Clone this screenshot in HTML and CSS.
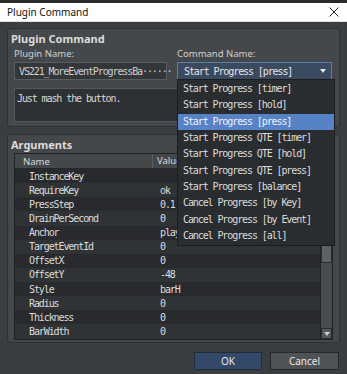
FILE: index.html
```html
<!DOCTYPE html>
<html>
<head>
<meta charset="utf-8">
<link rel="stylesheet" href="styles.css">
</head>
<body>
<div class="topstrip"></div>
<div class="titlebar">
  <span class="title">Plugin Command</span>
  <svg class="close" width="10" height="10" viewBox="0 0 10 10"><path d="M0.5 0.5 L9.5 9.5 M9.5 0.5 L0.5 9.5" stroke="#222" stroke-width="1"/></svg>
</div>
<div class="dialog">
  <section class="group g1">
    <h2 class="gtitle">Plugin Command</h2>
    <div class="fields">
      <div class="field">
        <div class="label">Plugin Name:</div>
        <div class="input mono"><span>VS221_MoreEventProgressBa···</span><span class="more">···</span></div>
      </div>
      <div class="field">
        <div class="label">Command Name:</div>
        <div class="combo mono"><span>Start Progress [press]</span><span class="arrow"></span></div>
      </div>
    </div>
    <div class="desc mono">Just mash the button.</div>
  </section>
  <section class="group g2">
    <h2 class="gtitle">Arguments</h2>
    <div class="table mono">
      <div class="tbody">
        <div class="row head"><div class="c1">Name</div><div class="c2">Value</div></div>
        <div class="row"><div class="c1">InstanceKey</div><div class="c2"></div></div>
        <div class="row"><div class="c1">RequireKey</div><div class="c2">ok</div></div>
        <div class="row"><div class="c1">PressStep</div><div class="c2">0.1</div></div>
        <div class="row"><div class="c1">DrainPerSecond</div><div class="c2">0</div></div>
        <div class="row"><div class="c1">Anchor</div><div class="c2">player</div></div>
        <div class="row"><div class="c1">TargetEventId</div><div class="c2">0</div></div>
        <div class="row"><div class="c1">OffsetX</div><div class="c2">0</div></div>
        <div class="row"><div class="c1">OffsetY</div><div class="c2">-48</div></div>
        <div class="row"><div class="c1">Style</div><div class="c2">barH</div></div>
        <div class="row"><div class="c1">Radius</div><div class="c2">0</div></div>
        <div class="row"><div class="c1">Thickness</div><div class="c2">0</div></div>
        <div class="row"><div class="c1">BarWidth</div><div class="c2">0</div></div>
      </div>
      <div class="scrollbar">
        <div class="sbtn"></div>
        <div class="thumb"></div>
        <div class="track"></div>
        <div class="sbtn down"><span></span></div>
      </div>
    </div>
  </section>
  <div class="buttons">
    <div class="btn ok">OK</div>
    <div class="btn">Cancel</div>
  </div>
</div>
<ul class="dropdown mono">
  <li>Start Progress [timer]</li>
  <li>Start Progress [hold]</li>
  <li class="sel">Start Progress [press]</li>
  <li>Start Progress QTE [timer]</li>
  <li>Start Progress QTE [hold]</li>
  <li>Start Progress QTE [press]</li>
  <li>Start Progress [balance]</li>
  <li>Cancel Progress [by Key]</li>
  <li>Cancel Progress [by Event]</li>
  <li>Cancel Progress [all]</li>
</ul>
</body>
</html>
```

FILE: styles.css
```css
* { box-sizing: border-box; }
html, body { margin: 0; padding: 0; }
body {
  width: 347px;
  height: 374px;
  overflow: hidden;
  background: #3b3e41;
  font-family: "Noto Sans", "Liberation Sans", sans-serif;
  color: #d4d4d4;
  position: relative;
}
.mono {
  font-family: "DejaVu Sans Mono", monospace;
  font-size: 10px;
  letter-spacing: -1.1px;
}
.topstrip { height: 3px; background: #2a2a2a; }
.titlebar {
  height: 19px;
  background: #ffffff;
  display: flex;
  align-items: center;
  justify-content: space-between;
  padding: 0 8px 0 7px;
  border-bottom: 1px solid #e2e2e2;
}
.title { font-size: 10px; color: #111; }
.close { display: block; }
.dialog { padding: 6px 7px 0 7px; }
.group {
  background: #45484b;
  border: 1px solid #2e3033;
  border-radius: 3px;
  padding: 2px 6px 4px 6px;
}
.gtitle {
  margin: 0 0 0 -3px;
  font-size: 11px;
  font-weight: bold;
  color: #dcdcdc;
  line-height: 15px;
}
.fields {
  display: grid;
  grid-template-columns: 153px 155px;
  column-gap: 10px;
}
.label { font-size: 9.5px; line-height: 14px; color: #d0d0d0; margin-top: 1px; }
.input {
  height: 18px;
  margin-top: 1px;
  background: #34373a;
  border: 1px solid #5a5d60;
  display: flex;
  align-items: center;
  justify-content: space-between;
  padding: 0 4px;
  color: #cfcfcf;
}
.combo {
  height: 18px;
  margin-top: 1px;
  background: #3a4a60;
  border: 1px solid #5b7fa8;
  display: flex;
  align-items: center;
  justify-content: space-between;
  padding: 0 5px 0 6px;
  color: #e4e4e4;
}
.arrow {
  width: 0; height: 0;
  border-left: 3px solid transparent;
  border-right: 3px solid transparent;
  border-top: 4px solid #e8e8e8;
}
.desc {
  margin-top: 8px;
  height: 34px;
  background: #2e3134;
  border: 1px solid #55585b;
  padding: 4px 2px;
  line-height: 12px;
  color: #d8d8d8;
}
.g2 { margin-top: 7px; padding-bottom: 2px; }
.g2 .gtitle { line-height: 15px; }
.table {
  margin-top: 1px;
  height: 187px;
  border: 1px solid #1f2123;
  background: #2a2c2f;
  display: flex;
}
.tbody { flex: 1; }
.row {
  display: grid;
  grid-template-columns: 137px 1fr;
  height: 14.14px;
  align-items: center;
  color: #dcdcdc;
}
.row:nth-child(odd) { background: #303336; }
.row:nth-child(even) { background: #282a2d; }
.row .c1 { padding-left: 14px; }
.row .c2 { padding-left: 8px; white-space: nowrap; overflow: hidden; }
.row.head {
  height: 15px;
  background: #45484b;
  font-family: "Noto Sans", "Liberation Sans", sans-serif;
  letter-spacing: 0;
  font-size: 9.5px;
  color: #d8d8d8;
  border-bottom: 1px solid #25272a;
}
.row.head .c1 { padding-left: 8px; }
.row.head .c2 { border-left: 1px solid #5a5d60; height: 100%; padding-left: 4px; line-height: 14px; }
.scrollbar {
  width: 12px;
  background: #3a3d40;
  display: flex;
  flex-direction: column;
  border-left: 1px solid #222;
}
.sbtn { height: 11px; background: #55585b; border: 1px solid #2a2c2f; }
.thumb { height: 98px; background: #5e6164; border: 1px solid #2a2c2f; }
.track { flex: 1; background: #4a4d50; }
.sbtn.down { display: flex; align-items: center; justify-content: center; }
.sbtn.down span {
  width: 0; height: 0;
  border-left: 3px solid transparent;
  border-right: 3px solid transparent;
  border-top: 4px solid #cfcfcf;
}
.buttons {
  display: flex;
  justify-content: flex-end;
  gap: 8px;
  margin-top: 9px;
  padding-right: 1px;
}
.btn {
  width: 69px;
  height: 18px;
  border: 1px solid #26282a;
  background: #505356;
  color: #e6e6e6;
  font-size: 10px;
  display: flex;
  align-items: center;
  justify-content: center;
}
.btn.ok { width: 68px; background: #34486a; border-color: #222a36; }
.dropdown {
  position: absolute;
  left: 177px;
  top: 79px;
  width: 158px;
  margin: 0;
  list-style: none;
  background: #2a2d30;
  border: 1px solid #1b1c1e;
  padding: 1px 0;
  color: #dcdcdc;
}
.dropdown li {
  height: 16.33px;
  line-height: 16.33px;
  padding-left: 5px;
}
.dropdown li.sel { background: #5783c6; color: #eef2fa; }
```
